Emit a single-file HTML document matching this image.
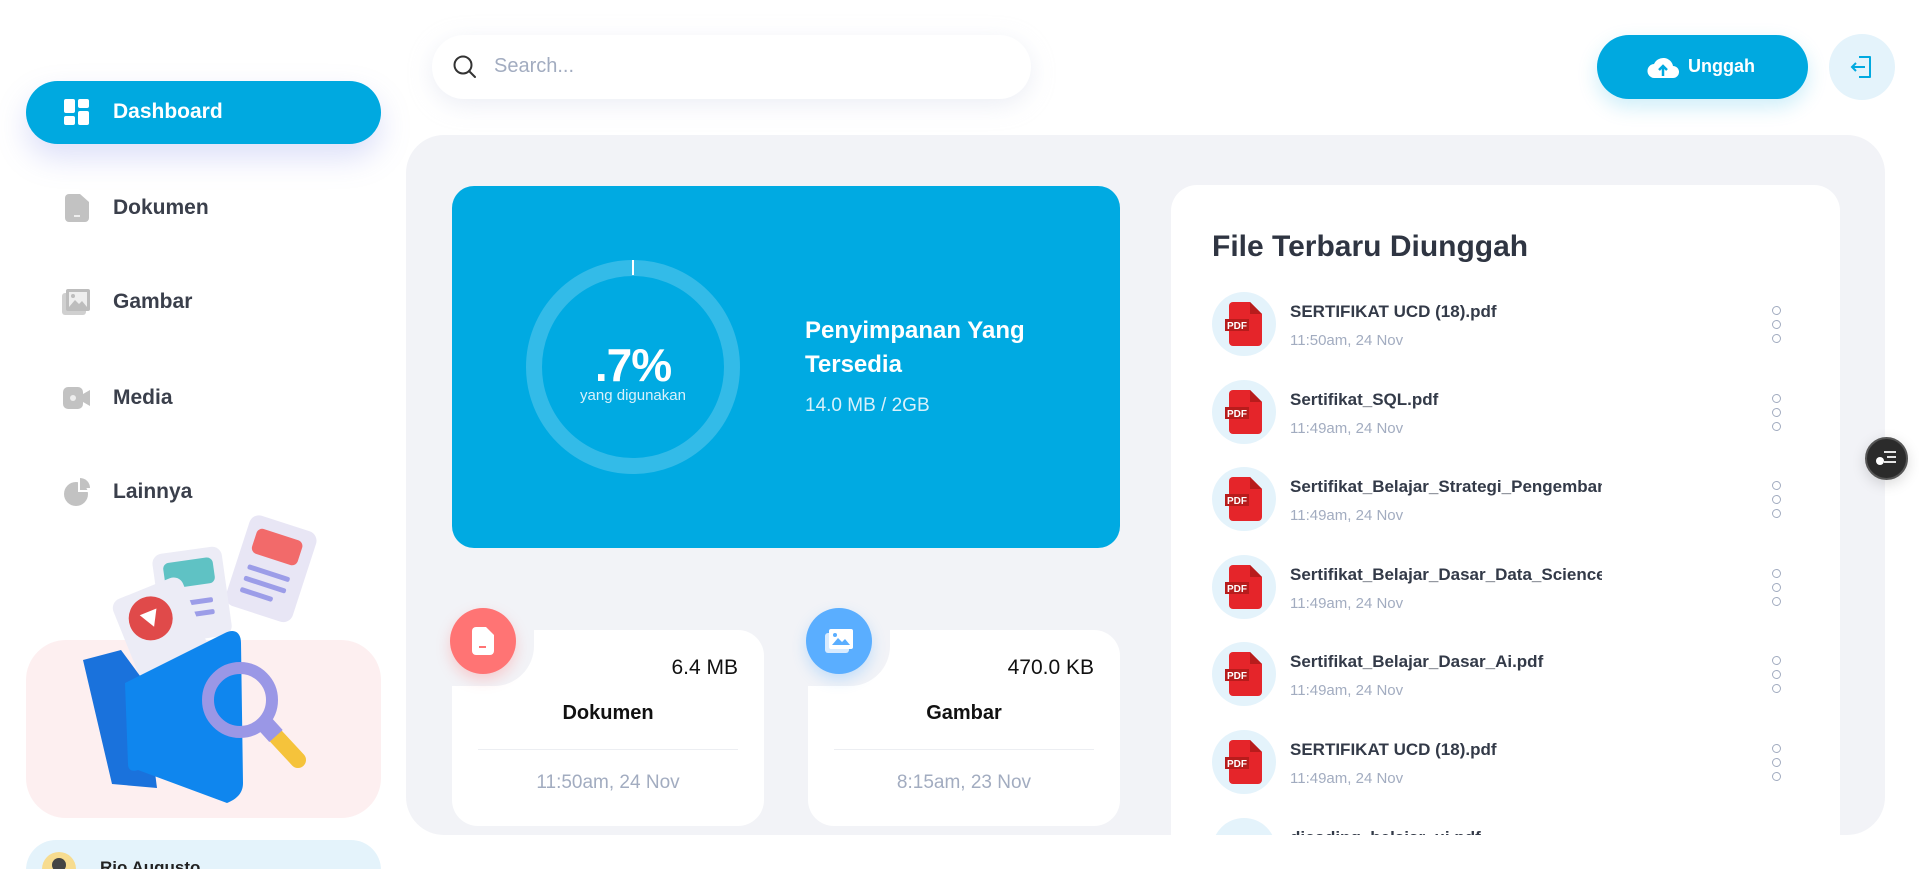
<!DOCTYPE html>
<html><head><meta charset="utf-8"><style>
*{margin:0;padding:0;box-sizing:border-box}
html,body{width:1919px;height:869px;overflow:hidden}
body{background:#fff;font-family:"Liberation Sans",sans-serif;position:relative;color:#2d3748}
.abs{position:absolute}
.nav{position:absolute;left:62px;display:flex;align-items:center;font-size:21px;font-weight:bold;color:#3a3f4b}
.nav .ic{width:30px;height:30px;margin-right:21px;display:flex;align-items:center;justify-content:center}
.row{position:absolute;left:1212px;width:600px;height:80px}
.row .c{position:absolute;left:0;top:0;width:64px;height:64px;border-radius:50%;background:#e4f3fb}
.row .n{position:absolute;left:78px;top:10px;font-size:17px;font-weight:bold;color:#333a48;white-space:nowrap;width:312px;overflow:hidden}
.row .t{position:absolute;left:78px;top:40px;font-size:15px;color:#a2acc0}
.row .d{position:absolute;left:560px;top:14px;width:10px}
.row .d i{display:block;width:9px;height:9px;border:1.5px solid #a2acc0;border-radius:50%;margin-bottom:5px}
.sc{position:absolute;top:630px;width:312px;height:196px;background:#fff;border-radius:26px}
.sc .cut{position:absolute;left:0;top:0;width:82px;height:56px;background:#f2f3f7;border-bottom-right-radius:40px}
.sc .sz{position:absolute;right:26px;top:26px;font-size:21px;color:#111}
.sc .lb{position:absolute;left:0;right:0;top:72px;text-align:center;font-size:20px;font-weight:bold;color:#111}
.sc .ln{position:absolute;left:26px;right:26px;top:119px;border-top:1px solid #eceef2}
.sc .tm{position:absolute;left:0;right:0;top:142px;text-align:center;font-size:19px;color:#a2acc0}
.ci{position:absolute;width:66px;height:66px;border-radius:50%;display:flex;align-items:center;justify-content:center}
svg{overflow:visible}
</style></head><body>

<!-- sidebar -->
<div class="abs" style="left:26px;top:81px;width:355px;height:63px;border-radius:32px;background:#00a9e0;box-shadow:0 14px 30px rgba(120,130,230,.25)"></div>
<div class="nav" style="top:97px;color:#fff"><div class="ic"><svg width="26" height="26" viewBox="0 0 26 26" fill="#fff"><rect x="0" y="0" width="11" height="14" rx="2"/><rect x="14" y="0" width="11" height="9" rx="2"/><rect x="0" y="17" width="11" height="9" rx="2"/><rect x="14" y="12" width="11" height="14" rx="2"/></svg></div>Dashboard</div>
<div class="nav" style="top:193px"><div class="ic"><svg width="24" height="28" viewBox="0 0 24 28"><path d="M4 0h11l9 8v16a4 4 0 0 1-4 4H4a4 4 0 0 1-4-4V4a4 4 0 0 1 4-4z" fill="#c2c2c2"/><rect x="9" y="21" width="6" height="2" fill="#eee"/></svg></div>Dokumen</div>
<div class="nav" style="top:287px"><div class="ic"><svg width="30" height="30" viewBox="0 0 30 30"><rect x="0" y="6" width="24" height="22" rx="3" fill="#d0d0d0"/><rect x="4" y="2" width="24" height="22" rx="2" fill="#bdbdbd"/><rect x="7" y="5" width="18" height="15" fill="#eee"/><path d="M7 20l6-7 4 4 3-3 5 6z" fill="#bdbdbd"/><circle cx="11" cy="9" r="2" fill="#bdbdbd"/></svg></div>Gambar</div>
<div class="nav" style="top:383px"><div class="ic"><svg width="28" height="26" viewBox="0 0 28 26"><rect x="0" y="2" width="20" height="22" rx="5" fill="#c2c2c2"/><path d="M20 9l7-4v16l-7-4z" fill="#c2c2c2"/><circle cx="10" cy="13" r="3" fill="#eee"/></svg></div>Media</div>
<div class="nav" style="top:477px"><div class="ic"><svg width="28" height="30" viewBox="0 0 28 30"><circle cx="13" cy="17" r="12" fill="#c2c2c2"/><path d="M17 1a10 10 0 0 1 10 10H17z" fill="#c2c2c2"/><path d="M16 4v10h10" stroke="#fff" stroke-width="2" fill="none"/></svg></div>Lainnya</div>

<div class="abs" style="left:26px;top:640px;width:355px;height:178px;border-radius:40px;background:#fdeff0"></div>
<!-- illustration -->
<svg class="abs" style="left:80px;top:520px" width="250" height="260" viewBox="0 0 250 260">
<g transform="rotate(18 200 70)"><rect x="150" y="5" width="70" height="95" rx="10" fill="#e8e6f5"/><rect x="160" y="17" width="48" height="26" rx="6" fill="#f26a6a"/><rect x="162" y="55" width="44" height="5" rx="2" fill="#9c9de8"/><rect x="162" y="67" width="44" height="5" rx="2" fill="#9c9de8"/><rect x="162" y="79" width="34" height="5" rx="2" fill="#9c9de8"/></g>
<g transform="rotate(-8 110 60)"><rect x="75" y="30" width="70" height="90" rx="10" fill="#ececf6"/><rect x="85" y="40" width="50" height="26" rx="6" fill="#5fc2c4"/><rect x="95" y="80" width="35" height="5" rx="2" fill="#9c9de8"/><rect x="95" y="92" width="35" height="5" rx="2" fill="#9c9de8"/></g>
<g transform="rotate(-22 80 100)"><rect x="40" y="65" width="75" height="90" rx="10" fill="#ececf6"/><circle cx="72" cy="95" r="22" fill="#e04a4a"/><path d="M63 88h18l-9 16z" fill="#fff"/></g>
<path d="M3 140l38-10 22 30 14 108-45 -4z" fill="#1a72dc"/>
<path d="M45 163l100-50c10-5 16 0 16 10l2 140c0 10-6 16-16 20L58 250c-6 2-10 0-10-6z" fill="#0f86ee"/>
<circle cx="160" cy="180" r="32" fill="none" stroke="#9a97e6" stroke-width="12"/>
<path d="M192 212l26 28" stroke="#f5c33b" stroke-width="16" stroke-linecap="round"/>
<path d="M186 205l10 11" stroke="#9a97e6" stroke-width="18"/>
</svg>

<div class="abs" style="left:26px;top:840px;width:355px;height:60px;border-radius:30px;background:#e4f3fb"></div>
<div class="abs" style="left:42px;top:852px;width:34px;height:34px;border-radius:50%;background:#f7dc8f"></div>
<div class="abs" style="left:52px;top:858px;width:14px;height:14px;border-radius:50%;background:#444"></div>
<div class="abs" style="left:100px;top:858px;font-size:17px;font-weight:bold;color:#222">Rio Augusto</div>

<!-- top bar -->
<div class="abs" style="left:432px;top:35px;width:599px;height:64px;border-radius:32px;background:#fff;box-shadow:0 6px 24px rgba(200,205,225,.35)"></div>
<svg class="abs" style="left:452px;top:54px" width="26" height="26" viewBox="0 0 26 26"><circle cx="11" cy="11" r="8.5" fill="none" stroke="#333" stroke-width="2"/><path d="M17 17l6 6" stroke="#333" stroke-width="2" stroke-linecap="round"/></svg>
<div class="abs" style="left:494px;top:55px;font-size:20px;color:#a2acc0">Search...</div>

<div class="abs" style="left:1597px;top:35px;width:211px;height:64px;border-radius:32px;background:#00a9e0;box-shadow:0 8px 20px rgba(0,169,224,.2)"></div>
<svg class="abs" style="left:1647px;top:54px" width="32" height="26" viewBox="0 0 32 26"><path d="M8 24a7 7 0 0 1-1-14 10 10 0 0 1 19 2 6 6 0 0 1 0 12z" fill="#fff"/><path d="M16 22v-9M12 16l4-4 4 4" stroke="#00a9e0" stroke-width="2.5" fill="none"/></svg>
<div class="abs" style="left:1688px;top:56px;font-size:18px;font-weight:bold;color:#fff">Unggah</div>
<div class="abs" style="left:1829px;top:34px;width:66px;height:66px;border-radius:50%;background:#e4f3fb"></div>
<svg class="abs" style="left:1848px;top:53px" width="28" height="28" viewBox="0 0 28 28"><path d="M11 4h11v20H11" stroke="#00a9e0" stroke-width="2" fill="none" stroke-linejoin="round"/><path d="M17 14H4M8 10l-4 4 4 4" stroke="#00a9e0" stroke-width="2" fill="none"/></svg>

<!-- main panel -->
<div class="abs" style="left:406px;top:135px;width:1479px;height:700px;border-radius:38px;background:#f2f3f7"></div>
<div class="abs" style="left:452px;top:186px;width:668px;height:362px;border-radius:22px;background:#00aae2"></div>
<svg class="abs" style="left:525px;top:259px" width="216" height="216" viewBox="0 0 216 216"><circle cx="108" cy="108" r="99" fill="none" stroke="#33bbe8" stroke-width="16"/><path d="M108 1v15" stroke="#fff" stroke-width="2"/></svg>
<div class="abs" style="left:533px;top:338px;width:200px;text-align:center;font-size:46px;font-weight:bold;color:#fff;letter-spacing:-1px">.7%</div>
<div class="abs" style="left:533px;top:387px;width:200px;text-align:center;font-size:15px;color:#d8f1fb">yang digunakan</div>
<div class="abs" style="left:805px;top:314px;font-size:24px;font-weight:bold;color:#fff;line-height:34px">Penyimpanan Yang<br>Tersedia</div>
<div class="abs" style="left:805px;top:395px;font-size:19px;color:#d8f1fb">14.0 MB / 2GB</div>

<div class="sc" style="left:452px"><div class="cut"></div><div class="sz">6.4 MB</div><div class="lb">Dokumen</div><div class="ln"></div><div class="tm">11:50am, 24 Nov</div></div>
<div class="ci" style="left:450px;top:608px;background:#ff7474;box-shadow:0 6px 14px rgba(255,116,116,.3)"><svg width="22" height="28" viewBox="0 0 22 28"><path d="M4 0h10l8 8v16a4 4 0 0 1-4 4H4a4 4 0 0 1-4-4V4a4 4 0 0 1 4-4z" fill="#fff"/><rect x="7" y="19" width="7" height="2" fill="#ff7474"/></svg></div>
<div class="sc" style="left:808px"><div class="cut"></div><div class="sz">470.0 KB</div><div class="lb">Gambar</div><div class="ln"></div><div class="tm">8:15am, 23 Nov</div></div>
<div class="ci" style="left:806px;top:608px;background:#5aaeff;box-shadow:0 6px 14px rgba(90,174,255,.3)"><svg width="30" height="28" viewBox="0 0 30 28"><rect x="1" y="6" width="24" height="20" rx="3" fill="#d8ebff"/><rect x="5" y="2" width="24" height="20" rx="2" fill="#fff"/><path d="M8 18l6-7 4 4 3-3 5 6z" fill="#5aaeff"/><circle cx="11" cy="8" r="2" fill="#5aaeff"/></svg></div>

<!-- recent files -->
<div class="abs" style="left:1171px;top:185px;width:669px;height:650px;border-radius:26px 26px 0 0;background:#fff"></div>
<div class="abs" style="left:1212px;top:230px;font-size:30px;font-weight:bold;color:#2f3542">File Terbaru Diunggah</div>

<div class="row" style="top:292px"><div class="c"></div><div class="n">SERTIFIKAT UCD (18).pdf</div><div class="t">11:50am, 24 Nov</div><div class="d"><i></i><i></i><i></i></div></div>
<div class="row" style="top:380px"><div class="c"></div><div class="n">Sertifikat_SQL.pdf</div><div class="t">11:49am, 24 Nov</div><div class="d"><i></i><i></i><i></i></div></div>
<div class="row" style="top:467px"><div class="c"></div><div class="n">Sertifikat_Belajar_Strategi_Pengembangan.pdf</div><div class="t">11:49am, 24 Nov</div><div class="d"><i></i><i></i><i></i></div></div>
<div class="row" style="top:555px"><div class="c"></div><div class="n">Sertifikat_Belajar_Dasar_Data_Science.pdf</div><div class="t">11:49am, 24 Nov</div><div class="d"><i></i><i></i><i></i></div></div>
<div class="row" style="top:642px"><div class="c"></div><div class="n">Sertifikat_Belajar_Dasar_Ai.pdf</div><div class="t">11:49am, 24 Nov</div><div class="d"><i></i><i></i><i></i></div></div>
<div class="row" style="top:730px"><div class="c"></div><div class="n">SERTIFIKAT UCD (18).pdf</div><div class="t">11:49am, 24 Nov</div><div class="d"><i></i><i></i><i></i></div></div>
<div class="row" style="top:818px;height:17px;overflow:hidden"><div class="c"></div><div class="n">dicoding_belajar_ui.pdf</div></div>

<svg class="abs" style="left:1213px;top:0" width="80" height="835" viewBox="0 0 80 835">
<defs><g id="p"><path d="M15 0h17l12 12v28a4 4 0 0 1-4 4H15a4 4 0 0 1-4-4V4a4 4 0 0 1 4-4z" fill="#e5252a"/><path d="M32 0v12h12z" fill="#b71c1c"/><rect x="7" y="17" width="24" height="12" fill="#b71c1c"/><text x="9" y="27" font-family="Liberation Sans" font-size="10" font-weight="bold" fill="#fff">PDF</text></g></defs>
<use href="#p" x="5" y="302"/><use href="#p" x="5" y="390"/><use href="#p" x="5" y="477"/><use href="#p" x="5" y="565"/><use href="#p" x="5" y="652"/><use href="#p" x="5" y="740"/>
</svg>

<!-- floating button -->
<div class="abs" style="left:1865px;top:437px;width:43px;height:43px;border-radius:50%;background:#2b2b2b;border:2px solid #555;box-shadow:0 4px 14px rgba(0,0,0,.15)"></div>
<svg class="abs" style="left:1875px;top:448px" width="24" height="20" viewBox="0 0 24 20"><path d="M9 4h12M12 9h9M9 14h12" stroke="#fff" stroke-width="1.8"/><circle cx="5" cy="13" r="4" fill="#fff"/></svg>
</body></html>
